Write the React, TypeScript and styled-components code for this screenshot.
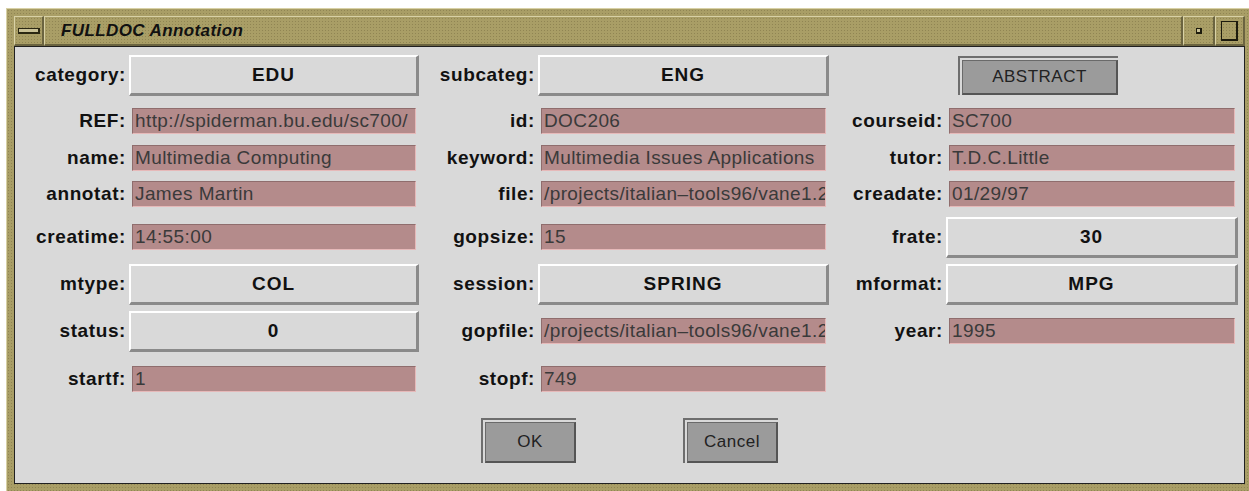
import React from "react";
import styled, { createGlobalStyle, css } from "styled-components";

const GlobalStyle = createGlobalStyle`
  html, body {
    margin: 0;
    padding: 0;
    background: #ffffff;
    overflow: hidden;
  }
  body {
    font-family: "Liberation Sans", Arial, sans-serif;
  }
`;

const tan = css`
  background-color: #a99e66;
  background-image: radial-gradient(rgba(70, 62, 28, 0.25) 0.5px, transparent 0.8px);
  background-size: 3px 3px;
`;

const Window = styled.div`
  ${tan};
  margin: 8px 0 0 6px;
  width: 1247px;
  height: 484px;
  box-sizing: border-box;
  border-top: 1px solid #d8d1a6;
  border-left: 1px solid #d8d1a6;
  padding: 7px 8px 8px 7px;
  display: flex;
  flex-direction: column;
`;

const TitleBar = styled.div`
  height: 30px;
  display: flex;
`;

const TitleCell = styled.div<{ $w?: number }>`
  ${tan};
  box-sizing: border-box;
  height: 100%;
  ${(p) => (p.$w ? `width: ${p.$w}px;` : "flex: 1;")}
  border-style: solid;
  border-width: 1px 2px 2px 1px;
  border-color: #d8d1a6 #6b6440 #6b6440 #d8d1a6;
  display: flex;
  align-items: center;
  justify-content: center;
`;

const TitleText = styled.div`
  flex: 1;
  padding-left: 16px;
  font-size: 17px;
  font-weight: bold;
  font-style: italic;
  letter-spacing: 0.4px;
  color: #111;
`;

const MenuBar = styled.div`
  width: 19px;
  height: 3px;
  background: #c9c196;
  border: 1px solid #2a2712;
  border-width: 1px 2px 2px 1px;
`;

const Dot = styled.div`
  width: 3px;
  height: 3px;
  background: #c9c196;
  border: 1px solid #1d1b0d;
  border-width: 1px 2px 2px 1px;
`;

const MaxBox = styled.div`
  width: 14px;
  height: 17px;
  border: 1px solid #1d1b0d;
  border-width: 1px 2px 2px 1px;
`;

const Body = styled.div`
  flex: 1;
  background: #d9d9d9;
  border: 1px solid #202020;
  display: flex;
  flex-direction: column;
`;

const Row = styled.div<{ $h: number; $mt: number }>`
  display: grid;
  grid-template-columns: 114px 290px 119px 291px 117px 292px;
  height: ${(p) => p.$h}px;
  margin-top: ${(p) => p.$mt}px;
  align-items: center;
`;

const Label = styled.span`
  text-align: right;
  padding-right: 3px;
  font-size: 19px;
  font-weight: bold;
  letter-spacing: 0.6px;
  color: #111;
  white-space: nowrap;
`;

const Field = styled.div`
  margin: 0 3px;
  height: 26px;
  box-sizing: border-box;
  background: #b48b8b;
  border-style: solid;
  border-width: 1px;
  border-color: #8f6d6d #e6b9b9 #e6b9b9 #8f6d6d;
  padding: 0 2px;
  font-size: 19px;
  letter-spacing: 0.4px;
  line-height: 24px;
  color: #3a3a3a;
  white-space: nowrap;
  overflow: hidden;
`;

const Choice = styled.div`
  height: 41px;
  box-sizing: border-box;
  background: #d9d9d9;
  border-style: solid;
  border-width: 2px 3px 3px 2px;
  border-color: #ffffff #8a8a8a #8a8a8a #ffffff;
  display: flex;
  align-items: center;
  justify-content: center;
  font-size: 19px;
  font-weight: bold;
  letter-spacing: 1px;
  color: #111;
`;

const PushFrame = styled.div<{ $w: number; $h: number; $ml?: number }>`
  width: ${(p) => p.$w}px;
  height: ${(p) => p.$h}px;
  margin-left: ${(p) => p.$ml ?? 0}px;
  box-sizing: border-box;
  border-style: solid;
  border-width: 2px 0 0 2px;
  border-color: #6e6e6e;
  padding: 2px 0 0 2px;
  display: flex;
`;

const Push = styled.div`
  flex: 1;
  background: #9b9b9b;
  border-style: solid;
  border-width: 1px 2px 2px 1px;
  border-color: #6a6a6a #555555 #555555 #6a6a6a;
  display: flex;
  align-items: center;
  justify-content: center;
  font-size: 17px;
  letter-spacing: 0.5px;
  color: #222;
`;

const Actions = styled.div`
  margin-top: 26px;
  display: flex;
  justify-content: center;
  gap: 107px;
`;

type Cell =
  | { label: string; kind: "field" | "choice"; value: string }
  | { label: ""; kind: "abstract"; value: string }
  | null;

const rows: { h: number; mt: number; cells: Cell[] }[] = [
  {
    h: 42,
    mt: 7,
    cells: [
      { label: "category:", kind: "choice", value: "EDU" },
      { label: "subcateg:", kind: "choice", value: "ENG" },
      { label: "", kind: "abstract", value: "ABSTRACT" },
    ],
  },
  {
    h: 26,
    mt: 12,
    cells: [
      { label: "REF:", kind: "field", value: "http://spiderman.bu.edu/sc700/" },
      { label: "id:", kind: "field", value: "DOC206" },
      { label: "courseid:", kind: "field", value: "SC700" },
    ],
  },
  {
    h: 26,
    mt: 11,
    cells: [
      { label: "name:", kind: "field", value: "Multimedia Computing" },
      { label: "keyword:", kind: "field", value: "Multimedia Issues Applications" },
      { label: "tutor:", kind: "field", value: "T.D.C.Little" },
    ],
  },
  {
    h: 26,
    mt: 10,
    cells: [
      { label: "annotat:", kind: "field", value: "James Martin" },
      { label: "file:", kind: "field", value: "/projects/italian–tools96/vane1.2" },
      { label: "creadate:", kind: "field", value: "01/29/97" },
    ],
  },
  {
    h: 42,
    mt: 9,
    cells: [
      { label: "creatime:", kind: "field", value: "14:55:00" },
      { label: "gopsize:", kind: "field", value: "15" },
      { label: "frate:", kind: "choice", value: "30" },
    ],
  },
  {
    h: 42,
    mt: 5,
    cells: [
      { label: "mtype:", kind: "choice", value: "COL" },
      { label: "session:", kind: "choice", value: "SPRING" },
      { label: "mformat:", kind: "choice", value: "MPG" },
    ],
  },
  {
    h: 42,
    mt: 5,
    cells: [
      { label: "status:", kind: "choice", value: "0" },
      { label: "gopfile:", kind: "field", value: "/projects/italian–tools96/vane1.2" },
      { label: "year:", kind: "field", value: "1995" },
    ],
  },
  {
    h: 26,
    mt: 14,
    cells: [
      { label: "startf:", kind: "field", value: "1" },
      { label: "stopf:", kind: "field", value: "749" },
      null,
    ],
  },
];

const renderCell = (cell: Cell, i: number) => {
  if (!cell) return null;
  const control =
    cell.kind === "field" ? (
      <Field>{cell.value}</Field>
    ) : cell.kind === "choice" ? (
      <Choice>{cell.value}</Choice>
    ) : (
      <div>
        <PushFrame $w={160} $h={39} $ml={12}>
          <Push>{cell.value}</Push>
        </PushFrame>
      </div>
    );
  return (
    <React.Fragment key={i}>
      <Label>{cell.label}</Label>
      {control}
    </React.Fragment>
  );
};

const App = () => {
  return (
    <>
      <GlobalStyle />
      <Window>
        <TitleBar>
          <TitleCell $w={30}>
            <MenuBar />
          </TitleCell>
          <TitleCell>
            <TitleText>FULLDOC Annotation</TitleText>
          </TitleCell>
          <TitleCell $w={32}>
            <Dot />
          </TitleCell>
          <TitleCell $w={30}>
            <MaxBox />
          </TitleCell>
        </TitleBar>
        <Body>
          {rows.map((row, r) => (
            <Row key={r} $h={row.h} $mt={row.mt}>
              {row.cells.map(renderCell)}
            </Row>
          ))}
          <Actions>
            <PushFrame $w={95} $h={45}>
              <Push>OK</Push>
            </PushFrame>
            <PushFrame $w={95} $h={45}>
              <Push>Cancel</Push>
            </PushFrame>
          </Actions>
        </Body>
      </Window>
    </>
  );
};

export default App;
